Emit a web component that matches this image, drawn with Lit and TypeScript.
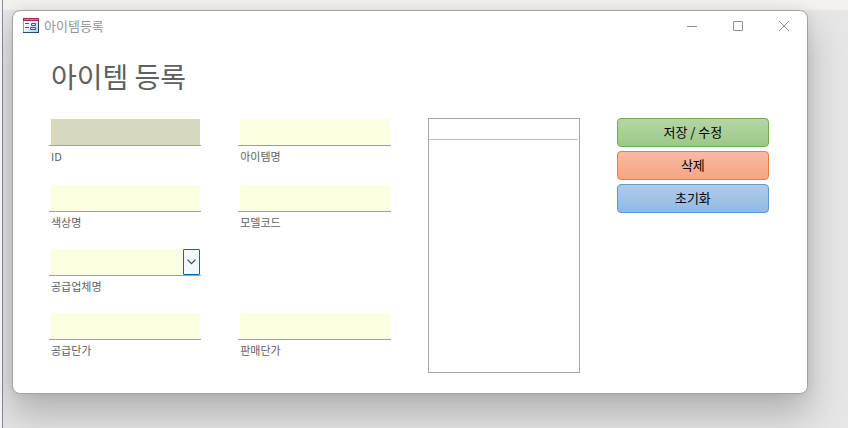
import { LitElement, html, css, svg } from "lit";
import { customElement } from "lit/decorators.js";

@customElement("item-field")
class ItemField extends LitElement {
  static properties = {
    label: {},
    kind: {},
  };
  declare label: string;
  declare kind: string;

  static styles = css`
    :host { display: block; min-width: 0; }
    .line { border-bottom: 1px solid #a0a0a0; padding: 1px 1px 0 2px; display: flex; position: relative; }
    .box {
      appearance: none; box-sizing: border-box; flex: 1; min-width: 0; width: 100%; height: 26px;
      margin: 0; padding: 0 4px; border: 0; border-radius: 0; outline: 0;
      background: #fcffdf; color: #444; font: inherit;
    }
    .locked { background: #d8d8bf; }
    .drop {
      position: absolute; right: 1px; top: 1px; width: 17px; height: 26px; box-sizing: border-box;
      border: 1px solid #0067c0; border-radius: 1px; background: #f1f8fe; pointer-events: none;
      display: flex; align-items: center; justify-content: center;
    }
    .label { display: block; padding: 2px 0 0 2px; font-size: 11px; line-height: 16px; color: #606060; }
  `;

  render() {
    const control =
      this.kind === "select"
        ? html`<select class="box" id="box"><option></option></select>
            <span class="drop"><svg width="9" height="6" viewBox="0 0 9 6" fill="none" stroke="#444" stroke-width="1.2"><path d="M.5 .7 4.5 4.7 8.5 .7" /></svg></span>`
        : html`<input class="box ${this.kind === "locked" ? "locked" : ""}" id="box" type="text" ?readonly=${this.kind === "locked"} />`;
    return html`<div class="line">${control}</div>
      <label class="label" for="box">${this.label}</label>`;
  }
}

@customElement("app-root")
class AppRoot extends LitElement {
  static styles = css`
    :host {
      display: flex; flex-direction: column; box-sizing: border-box; min-height: 100vh;
      font-family: "Noto Sans CJK KR", sans-serif;
      background: linear-gradient(#f3f2f0 10px, #e6e6e6 10px);
      padding: 10px 40px 34px 9px; border-left: 2px solid #f4f4f6; overflow: hidden;
      position: relative;
    }
    .edge { position: absolute; inset: 0 auto 0 0; width: 1px; background: #868d95; }
    .window {
      position: relative; flex: 1; display: flex; flex-direction: column; margin-left: 1px;
      border: 1px solid #a3a3a3; border-radius: 8px; background: #fff;
      box-shadow: 0 20px 36px 2px rgba(0, 0, 0, 0.22), 0 0 12px rgba(0, 0, 0, 0.08);
    }
    .bar { display: flex; align-items: center; height: 30px; padding-left: 10px; }
    .name { margin-left: 5px; flex: 1; font-size: 13px; line-height: 20px; color: #959595; }
    .sys {
      width: 46px; height: 30px; padding: 0; border: 0; background: none;
      display: flex; align-items: center; justify-content: center;
    }
    h1 { margin: 15px 38px 0; font-size: 28px; line-height: 40px; font-weight: 400; color: #606060; }
    .body {
      display: grid; grid-template-columns: repeat(4, 1fr); column-gap: 37px;
      grid-template-rows: 66px 64px 64px 61px; padding: 22px 38px 20px 36px;
    }
    .list { grid-column: 3; grid-row: 1 / 5; border: 1px solid #a6a6a6; padding-right: 1px; }
    .head { height: 20px; border-bottom: 1px solid #c0c0c0; }
    .actions { grid-column: 4; grid-row: 1 / 5; display: flex; flex-direction: column; gap: 4px; }
    .action {
      height: 29px; padding: 0 0 2px; border: 1px solid; border-radius: 4px;
      font: 13px/20px "Noto Sans CJK KR", sans-serif; color: #000;
    }
    .save { border-color: #70ad47; background: linear-gradient(#b5d5a7, #9cc986); }
    .delete { border-color: #ed7d31; background: linear-gradient(#f8baa2, #f7a581); }
    .reset { border-color: #5b9bd5; background: linear-gradient(#b1cbe9, #92b9e4); }
  `;

  render() {
    const fields = [
      ["ID", "locked"], ["아이템명", "text"],
      ["색상명", "text"], ["모델코드", "text"],
      ["공급업체명", "select"], null,
      ["공급단가", "text"], ["판매단가", "text"],
    ];
    const glyph = (shape: unknown) =>
      html`<svg width="12" height="12" viewBox="0 0 12 12" fill="none" stroke="#8f8f8f">${shape}</svg>`;
    return html`
      <div class="edge"></div>
      <main class="window">
        <header class="bar">
          <svg width="16" height="16" viewBox="0 0 16 16" aria-hidden="true">
            <defs>
              <linearGradient id="sheet" x1="0" y1="0" x2="1" y2="1">
                <stop offset=".3" stop-color="#fff" />
                <stop offset="1" stop-color="#a9c4ee" />
              </linearGradient>
            </defs>
            <path fill="url(#sheet)" d="M0 0h16v15H0z" />
            <path fill="#a82b58" d="M0 0h16v3H0z" />
            <path fill="#dc6d93" d="M1 1h14v1H1z" />
            <path fill="#8fa3c4" d="M0 3h1v12H0z" />
            <path fill="#2f4673" d="M15 3h1v12h-1zM0 14h16v1H0z" />
            <path fill="#4a5670" d="M2 5h4v1H2zM2 9h4v1H2z" />
            <path fill="none" stroke="#4a5670" d="M8.500 5.500h4v2h-4zM7.500 9.500h5v2h-5z" />
          </svg>
          <span class="name">아이템등록</span>
          <button class="sys" aria-label="최소화">${glyph(svg`<path d="M1 6.500h10" />`)}</button>
          <button class="sys" aria-label="최대화">${glyph(svg`<rect x="1.500" y="1.500" width="9" height="9" rx=".5" />`)}</button>
          <button class="sys" aria-label="닫기">${glyph(svg`<path d="M1 1 11 11M11 1 1 11" />`)}</button>
        </header>
        <h1>아이템 등록</h1>
        <form class="body" @submit=${(e: Event) => e.preventDefault()}>
          ${fields.map((f) => (f ? html`<item-field .label=${f[0]} .kind=${f[1]}></item-field>` : html`<span></span>`))}
          <div class="list"><div class="head"></div></div>
          <div class="actions">
            <button class="action save">저장 / 수정</button>
            <button class="action delete" type="button">삭제</button>
            <button class="action reset" type="reset">초기화</button>
          </div>
        </form>
      </main>
    `;
  }
}
